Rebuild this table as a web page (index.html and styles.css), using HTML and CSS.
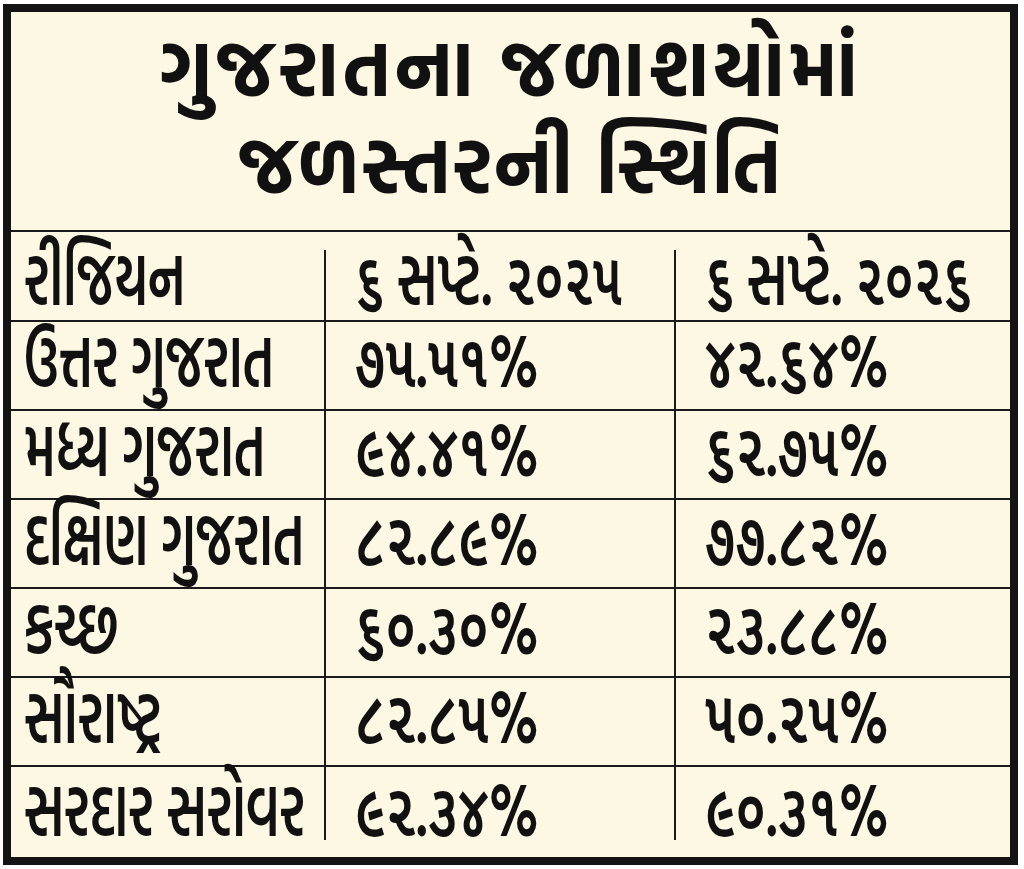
FILE: index.html
```html
<!DOCTYPE html>
<html lang="gu">
<head>
<meta charset="utf-8">
<title>ગુજરાતના જળાશયોમાં જળસ્તરની સ્થિતિ</title>
<link rel="stylesheet" href="styles.css">
</head>
<body>
<div class="card">
  <div class="title">
    <div class="title-line">ગુજરાતના જળાશયોમાં</div>
    <div class="title-line second">જળસ્તરની સ્થિતિ</div>
  </div>
  <div class="row head">
    <div class="cell c1"><span class="t">રીજિયન</span></div>
    <div class="cell c2"><span class="t">૬ સપ્ટે. ૨૦૨૫</span></div>
    <div class="cell c3"><span class="t">૬ સપ્ટે. ૨૦૨૬</span></div>
  </div>
  <div class="row">
    <div class="cell c1"><span class="t">ઉત્તર ગુજરાત</span></div>
    <div class="cell c2"><span class="t n">૭૫.૫૧%</span></div>
    <div class="cell c3"><span class="t n">૪૨.૬૪%</span></div>
  </div>
  <div class="row">
    <div class="cell c1"><span class="t">મધ્ય ગુજરાત</span></div>
    <div class="cell c2"><span class="t n">૯૪.૪૧%</span></div>
    <div class="cell c3"><span class="t n">૬૨.૭૫%</span></div>
  </div>
  <div class="row">
    <div class="cell c1"><span class="t">દક્ષિણ ગુજરાત</span></div>
    <div class="cell c2"><span class="t n">૮૨.૮૯%</span></div>
    <div class="cell c3"><span class="t n">૭૭.૮૨%</span></div>
  </div>
  <div class="row">
    <div class="cell c1"><span class="t">કચ્છ</span></div>
    <div class="cell c2"><span class="t n">૬૦.૩૦%</span></div>
    <div class="cell c3"><span class="t n">૨૩.૮૮%</span></div>
  </div>
  <div class="row">
    <div class="cell c1"><span class="t">સૌરાષ્ટ્ર</span></div>
    <div class="cell c2"><span class="t n">૮૨.૮૫%</span></div>
    <div class="cell c3"><span class="t n">૫૦.૨૫%</span></div>
  </div>
  <div class="row last">
    <div class="cell c1"><span class="t">સરદાર સરોવર</span></div>
    <div class="cell c2"><span class="t n">૯૨.૩૪%</span></div>
    <div class="cell c3"><span class="t n">૯૦.૩૧%</span></div>
  </div>
</div>
</body>
</html>
```
FILE: styles.css
```css
html, body {
  margin: 0;
  padding: 0;
  background: #ffffff;
}
body {
  padding: 4px 6px 4px 3px;
  font-family: "Hind Vadodara", "Noto Sans Gujarati", sans-serif;
  color: #111111;
}
.card {
  width: 999px;
  height: 845px;
  border: 8px solid #141414;
  background: #fcf8e4;
  display: flex;
  flex-direction: column;
}
.title {
  box-sizing: border-box;
  height: 220px;
  border-bottom: 2px solid #1a1a1a;
  display: flex;
  flex-direction: column;
  align-items: center;
  justify-content: center;
  padding-bottom: 12px;
}
.title-line {
  font-size: 78px;
  font-weight: 700;
  line-height: 97px;
  letter-spacing: 4px;
  white-space: nowrap;
}
.title-line.second {
  letter-spacing: 2px;
}
.row {
  height: 89px;
  box-sizing: border-box;
  border-bottom: 2px solid #1a1a1a;
  display: grid;
  grid-template-columns: 313px 350px 336px;
  grid-template-rows: minmax(0, 1fr);
}
.row.head {
  height: 90px;
  padding-top: 18px;
}
.row.last {
  height: 90px;
  border-bottom: none;
  padding-bottom: 17px;
}
.cell {
  display: flex;
  align-items: center;
  min-height: 0;
  padding-bottom: 12px;
}
.head .cell { padding-bottom: 14px; }
.last .cell { padding-bottom: 0; padding-top: 10px; }
.c1 { padding-left: 13px; }
.c2 { padding-left: 29px; border-left: 2px solid #1a1a1a; }
.c3 { padding-left: 29px; border-left: 2px solid #1a1a1a; }
.t {
  display: inline-block;
  font-size: 74px;
  font-weight: 600;
  line-height: 1;
  white-space: nowrap;
  transform: scaleX(0.7);
  transform-origin: 0 50%;
}
.t.n {
  transform: scaleX(0.73);
}
```
